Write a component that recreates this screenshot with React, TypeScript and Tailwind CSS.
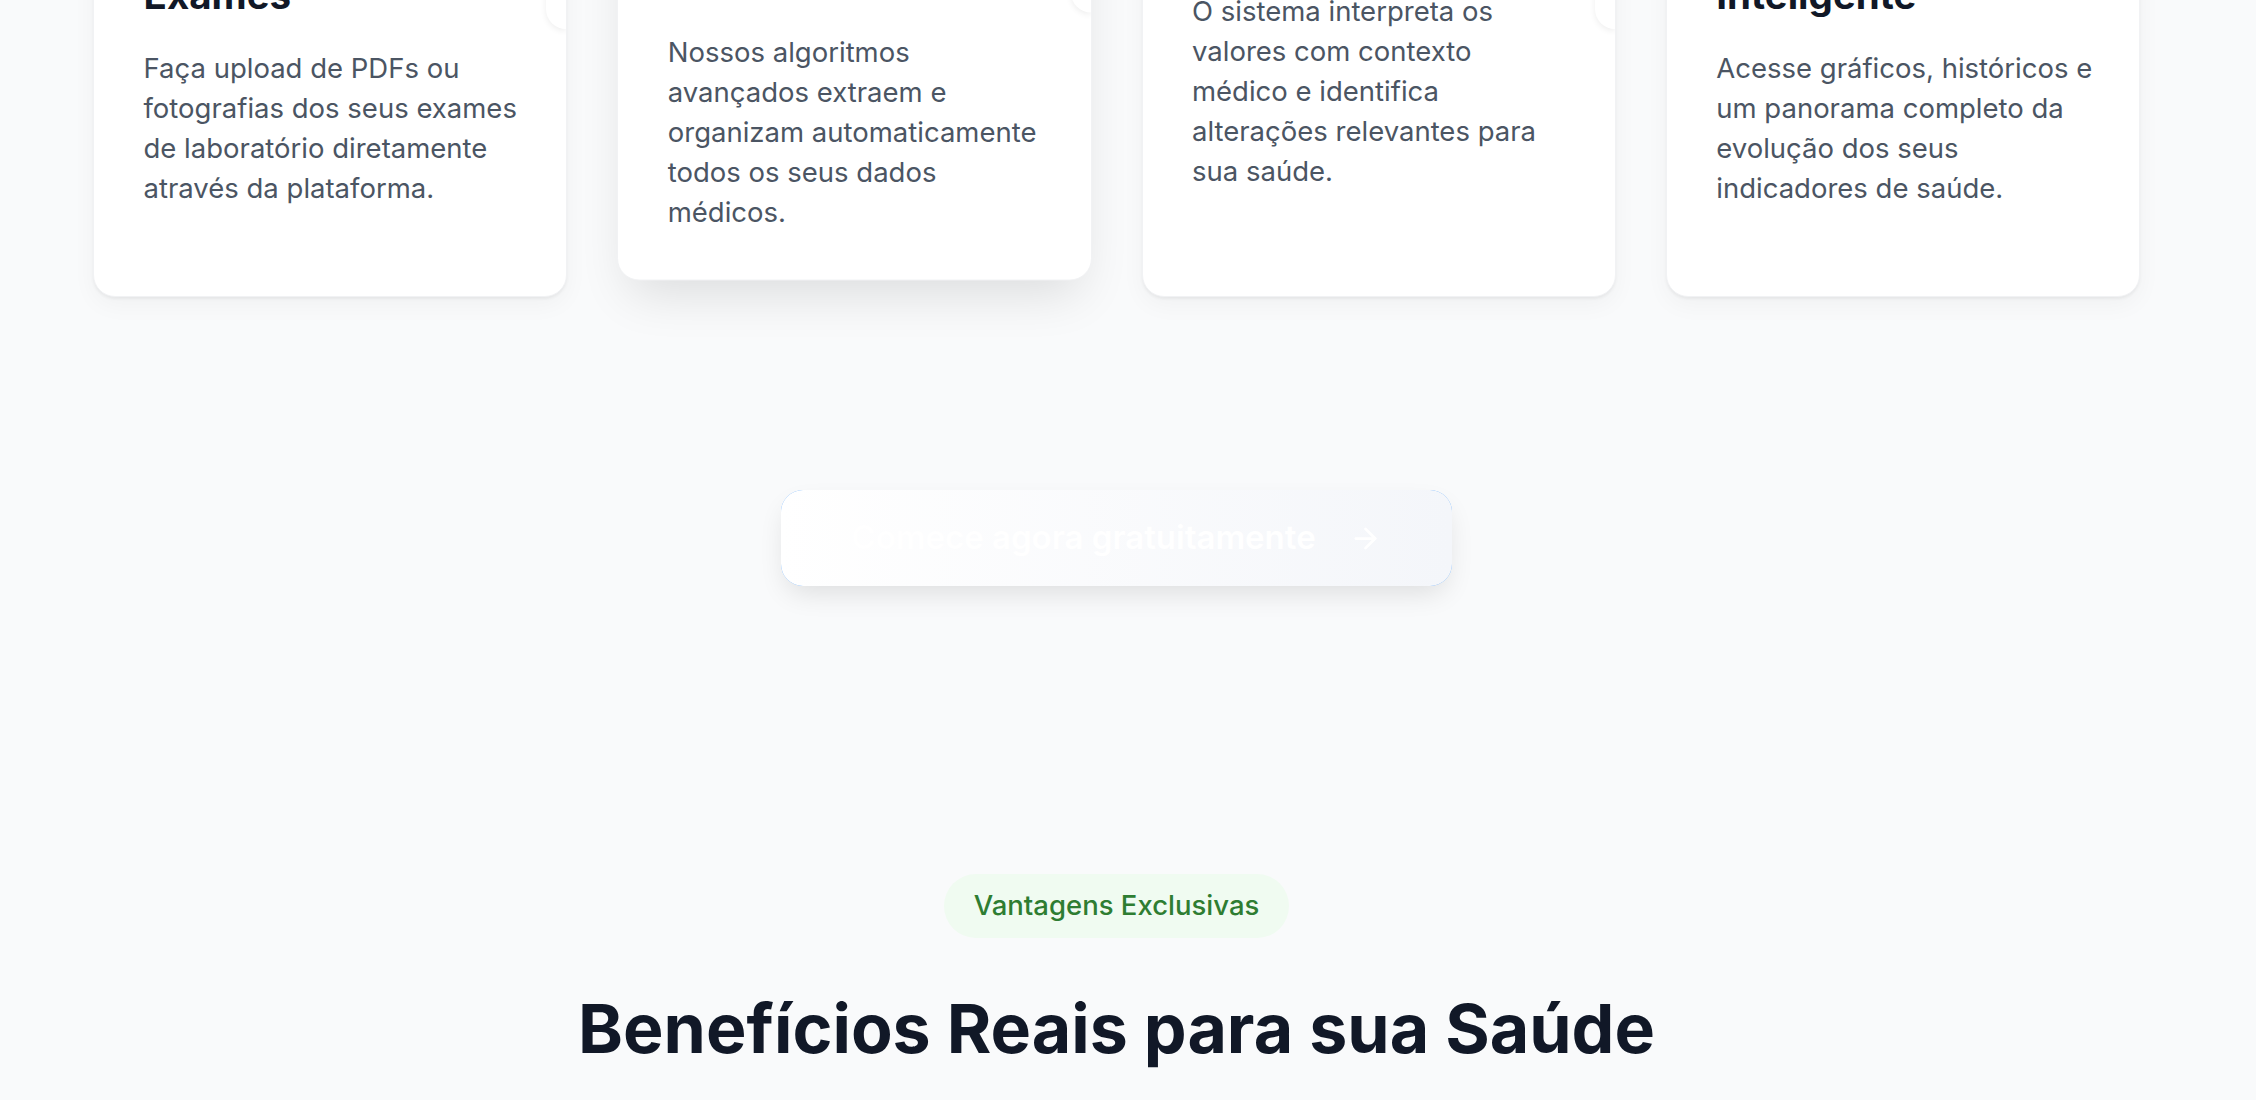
import { ArrowRight, BarChart3, Brain, Cpu, Upload } from "lucide-react"

const features = [
  {
    title: ["Upload de", "Exames"],
    desc: [
      "Faça upload de PDFs ou",
      "fotografias dos seus exames",
      "de laboratório diretamente",
      "através da plataforma.",
    ],
    icon: Upload,
    corner: true,
  },
  {
    title: ["Extração", "Automática"],
    desc: [
      "Nossos algoritmos",
      "avançados extraem e",
      "organizam automaticamente",
      "todos os seus dados",
      "médicos.",
    ],
    icon: Cpu,
    corner: true,
    raised: true,
  },
  {
    title: ["Análise com IA"],
    desc: [
      "O sistema interpreta os",
      "valores com contexto",
      "médico e identifica",
      "alterações relevantes para",
      "sua saúde.",
    ],
    icon: Brain,
    corner: true,
  },
  {
    title: ["Dashboard", "Inteligente"],
    desc: [
      "Acesse gráficos, históricos e",
      "um panorama completo da",
      "evolução dos seus",
      "indicadores de saúde.",
    ],
    icon: BarChart3,
    corner: false,
  },
]

function FeatureCard({ f }: { f: (typeof features)[number] }) {
  const Icon = f.icon
  return (
    <div
      className={
        f.raised
          ? "relative overflow-hidden rounded-[22px] border border-[#f1f2f4] bg-white px-[49.5px] pt-[49.5px] pb-[48px] -translate-y-[16.5px] shadow-[0_24px_50px_-12px_rgba(0,0,0,0.12)]"
          : "relative overflow-hidden rounded-[22px] border border-[#f1f2f4] bg-white px-[49.5px] pt-[49.5px] pb-[48px] shadow-[0_2px_3px_rgba(0,0,0,0.05),0_8px_24px_rgba(0,0,0,0.04)]"
      }
    >
      {/* corner decoration */}
      {f.corner && (
        <div className="absolute right-0 top-0 h-[289.5px] w-[20px] rounded-bl-[20px] bg-white shadow-[0_2px_6px_rgba(0,0,0,0.07)]" />
      )}

      <div className="mb-[33px] flex h-[88px] w-[88px] items-center justify-center rounded-[22px] bg-blue-50 text-blue-600">
        <Icon className="h-[44px] w-[44px]" />
      </div>
      <h3 className="mb-[24.65px] text-[38.5px] font-bold leading-[56.7px] text-[#111827]">
        {f.title.map((t) => (
          <span key={t} className="block whitespace-nowrap">
            {t}
          </span>
        ))}
      </h3>
      <p className="text-[27.5px] leading-[40px] text-[#4b5563]">
        {f.desc.map((line) => (
          <span key={line} className="block whitespace-nowrap">
            {line}
          </span>
        ))}
      </p>
    </div>
  )
}

export default function App() {
  return (
    <div className="min-h-screen w-full overflow-hidden bg-[#f9fafb] font-['Inter','Noto_Sans',sans-serif]">
      <div className="w-[2233px]">
        {/* Como funciona - cards */}
        <section className="-mt-[261.55px] px-[93px]">
          <div className="grid grid-cols-4 gap-[50px]">
            {features.map((f) => (
              <FeatureCard key={f.title.join(" ")} f={f} />
            ))}
          </div>

          {/* CTA */}
          <div className="mt-[193px] flex justify-center">
            <button className="relative flex h-[96px] w-[671px] items-center justify-center rounded-[22px] bg-blue-400 shadow-[0_12px_28px_-6px_rgba(0,0,0,0.12)]">
              <span className="absolute inset-0 rounded-[22px] bg-gradient-to-r from-white to-[#f4f6fa]" />
              <span className="relative flex items-center text-[33px] font-semibold text-white">
                Comece agora gratuitamente
                <ArrowRight className="ml-[33px] h-[33px] w-[33px]" strokeWidth={2} />
              </span>
            </button>
          </div>
        </section>

        {/* Benefícios */}
        <section className="mt-[288px] flex flex-col items-center pb-24">
          <span className="flex h-[64px] items-center rounded-full bg-[#f0fbf1] px-[30px] text-[27.5px] font-medium text-[#2e7d32]">
            Vantagens Exclusivas
          </span>
          <h2 className="mt-[47.8px] text-[68px] font-bold leading-[85px] text-[#111827]">
            Benefícios Reais para sua Saúde
          </h2>
          <p className="mt-6 max-w-[1100px] text-center text-[27.5px] leading-[44px] text-[#4b5563]">
            Descubra como nossa plataforma transforma a maneira como você acompanha e entende seus exames.
          </p>
        </section>
      </div>
    </div>
  )
}
